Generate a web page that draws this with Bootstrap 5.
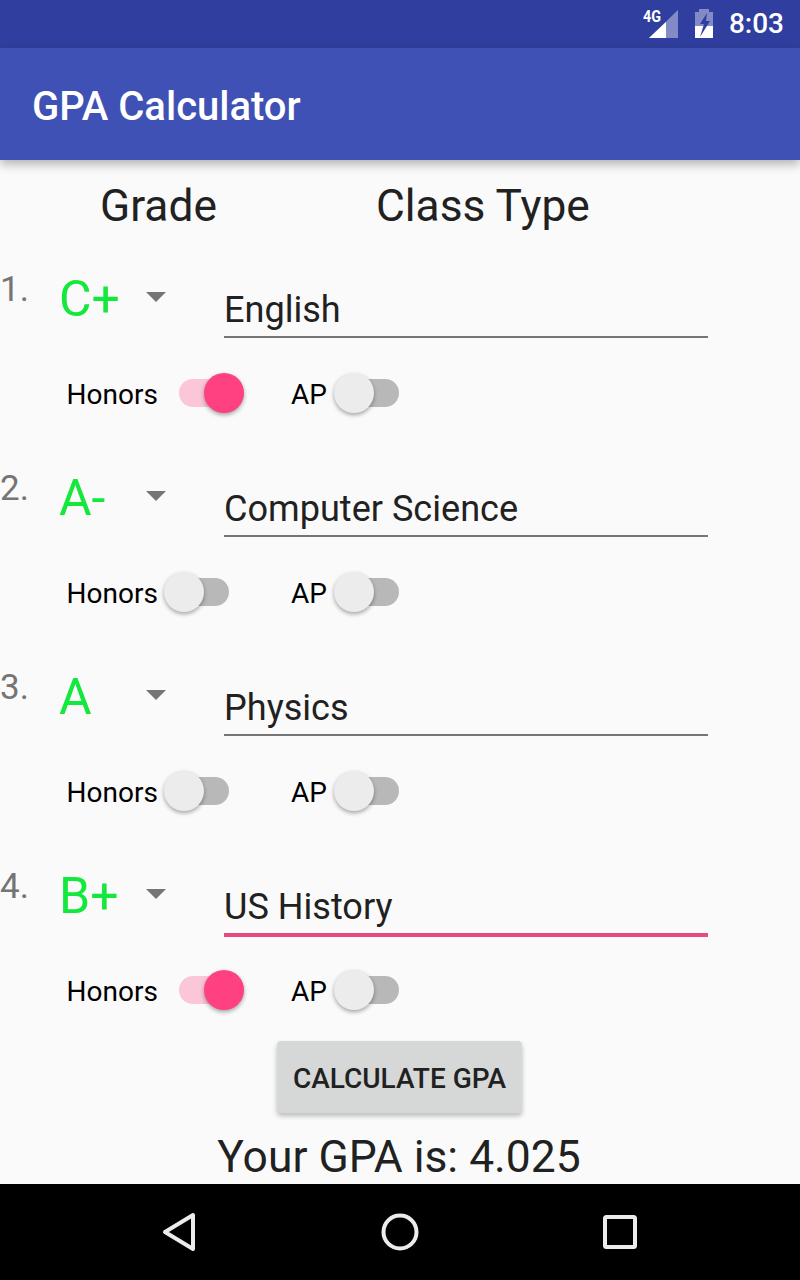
<!DOCTYPE html>
<html lang="en">
<head>
<meta charset="utf-8">
<title>GPA Calculator</title>
<link rel="stylesheet" href="https://cdn.jsdelivr.net/npm/bootstrap@5.3.0/dist/css/bootstrap.min.css">
<style>
html,body{margin:0;height:100%;background:#fafafa;font-family:Roboto,"Liberation Sans",sans-serif;}
.screen{width:800px;height:1280px;overflow:hidden;display:flex;flex-direction:column;}
.statusbar{height:48px;background:#303f9f;color:#fff;padding-right:16px;flex:none;}
.status-time{font-size:28px;font-weight:500;line-height:48px;margin-left:16px;}
.sig-icon{margin-right:16px;}
.appbar{height:112px;flex:none;background:#3f51b5;color:#fff;padding-left:32px;font-size:40px;font-weight:500;box-shadow:0 4px 10px rgba(0,0,0,.3);position:relative;z-index:2;}
.appbar-title{line-height:118px;height:112px;}
.content{height:1024px;flex:none;overflow:hidden;position:relative;}
.heads{height:101px;padding-left:100px;font-size:44.3px;line-height:92px;color:#212121;}
.head-grade{width:276px;}
.entry{height:199px;}
.entry-top{height:103px;position:relative;}
.num{width:59px;flex:none;font-size:35px;line-height:40px;color:#757575;padding-top:9px;}
.grade-pick{width:165px;flex:none;font-size:50px;line-height:56px;color:#14e83c;padding-top:10px;}
.grade-val{width:87px;flex:none;}
.caret{width:0;height:0;border-left:10px solid transparent;border-right:10px solid transparent;border-top:10px solid #757575;margin-top:21px;}
.subject{width:484px;height:62px;margin-top:15px;border-bottom:2px solid #757575;font-size:36.1px;line-height:68px;color:#212121;}
.subject.on{height:64px;border-bottom:4px solid #e9497f;}
.switches{padding-left:66.6px;height:60px;font-size:28px;color:#000;}
.lbl-honors{width:112.4px;flex:none;padding-top:2px;}
.lbl-ap{width:58px;flex:none;padding-top:2px;}
.toggle{width:65px;height:40px;position:relative;display:block;flex:none;margin:-2px 15px 0 -15px;}
.toggle::before{content:"";position:absolute;left:15px;right:0;top:6px;height:28px;border-radius:14px;background:#b8b8b8;}
.toggle::after{content:"";position:absolute;top:0;left:0;width:40px;height:40px;border-radius:50%;background:#ececec;box-shadow:0 2px 4px rgba(0,0,0,.35);}
.toggle.on{margin-left:0;margin-right:0;}
.toggle.on::before{left:0;background:#fbc6d8;}
.toggle.on::after{left:25px;background:#ff4081;}
.gap-sw{width:47px;flex:none;}
.calc{width:245px;height:72px;background:#d6d7d7;border:0;border-radius:4px;font-size:28px;font-weight:500;color:#212121;box-shadow:0 3px 5px rgba(0,0,0,.25);padding:3px 0 0;display:block;margin-left:277px;}
.calc-wrap{margin-top:-16px;}
.result{font-size:44.4px;line-height:56px;text-align:center;color:#212121;margin-top:16px;padding-right:2px;}
.navbottom{height:96px;background:#000;flex:none;}
.nav-slot{width:220px;}
</style>
</head>
<body>
<div class="screen">
  <div class="statusbar d-flex align-items-center justify-content-end">
    <svg class="sig-icon" width="36" height="38" viewBox="0 -4 36 38">
      <path d="M35 1V29H6Z" fill="#fff" opacity=".4"/>
      <path d="M23 13V29H6Z" fill="#fff"/>
      <text x="0" y="13" fill="#fff" font-family="Roboto" font-weight="700" font-size="16" textLength="18" lengthAdjust="spacingAndGlyphs">4G</text>
    </svg>
    <svg width="18" height="30" viewBox="0 0 18 30">
      <path d="M4 0H14V3H18V29H0V3H4Z" fill="#fff" opacity=".4"/>
      <path d="M0 17H18V29H0Z" fill="#fff"/>
      <path d="M12 4 5 15H9L5 28 15 12H11Z" fill="#303f9f"/>
    </svg>
    <span class="status-time">8:03</span>
  </div>
  <div class="appbar"><div class="appbar-title">GPA Calculator</div></div>
  <div class="content">
    <div class="heads d-flex"><div class="head-grade">Grade</div><div>Class Type</div></div>

    <div class="entry">
      <div class="entry-top d-flex">
        <div class="num">1.</div>
        <div class="grade-pick d-flex"><span class="grade-val">C+</span><span class="caret"></span></div>
        <div class="subject">English</div>
      </div>
      <div class="switches d-flex align-items-center">
        <span class="lbl-honors">Honors</span><span class="toggle on"></span><span class="gap-sw"></span><span class="lbl-ap">AP</span><span class="toggle"></span>
      </div>
    </div>

    <div class="entry">
      <div class="entry-top d-flex">
        <div class="num">2.</div>
        <div class="grade-pick d-flex"><span class="grade-val">A-</span><span class="caret"></span></div>
        <div class="subject">Computer Science</div>
      </div>
      <div class="switches d-flex align-items-center">
        <span class="lbl-honors">Honors</span><span class="toggle"></span><span class="gap-sw"></span><span class="lbl-ap">AP</span><span class="toggle"></span>
      </div>
    </div>

    <div class="entry">
      <div class="entry-top d-flex">
        <div class="num">3.</div>
        <div class="grade-pick d-flex"><span class="grade-val">A</span><span class="caret"></span></div>
        <div class="subject">Physics</div>
      </div>
      <div class="switches d-flex align-items-center">
        <span class="lbl-honors">Honors</span><span class="toggle"></span><span class="gap-sw"></span><span class="lbl-ap">AP</span><span class="toggle"></span>
      </div>
    </div>

    <div class="entry">
      <div class="entry-top d-flex">
        <div class="num">4.</div>
        <div class="grade-pick d-flex"><span class="grade-val">B+</span><span class="caret"></span></div>
        <div class="subject on">US History</div>
      </div>
      <div class="switches d-flex align-items-center">
        <span class="lbl-honors">Honors</span><span class="toggle on"></span><span class="gap-sw"></span><span class="lbl-ap">AP</span><span class="toggle"></span>
      </div>
    </div>

    <div class="calc-wrap"><button type="button" class="btn calc">CALCULATE GPA</button></div>
    <div class="result">Your GPA is: 4.025</div>
  </div>
  <div class="navbottom d-flex align-items-center justify-content-center">
    <div class="nav-slot d-flex justify-content-center">
      <svg width="36" height="40" viewBox="0 0 36 40"><path d="M31 3V37L3 20Z" fill="none" stroke="#ececec" stroke-width="4" stroke-linejoin="round"/></svg>
    </div>
    <div class="nav-slot d-flex justify-content-center">
      <svg width="40" height="40" viewBox="0 0 40 40"><circle cx="20" cy="20" r="16.5" fill="none" stroke="#ececec" stroke-width="4"/></svg>
    </div>
    <div class="nav-slot d-flex justify-content-center">
      <svg width="34" height="34" viewBox="0 0 34 34"><rect x="2" y="2" width="30" height="30" rx="1.5" fill="none" stroke="#ececec" stroke-width="4"/></svg>
    </div>
  </div>
</div>
<script src="https://cdn.jsdelivr.net/npm/bootstrap@5.3.0/dist/js/bootstrap.bundle.min.js"></script>
</body>
</html>
